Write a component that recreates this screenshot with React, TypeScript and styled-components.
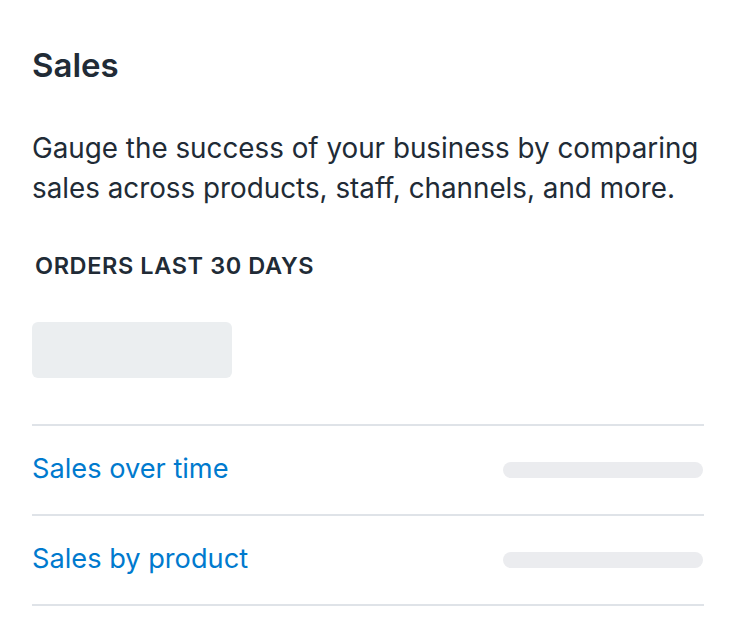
import React from 'react';
import styled, { createGlobalStyle } from 'styled-components';

const GlobalStyle = createGlobalStyle`
  html, body {
    margin: 0;
    padding: 0;
    background: #ffffff;
  }
  body {
    font-family: Inter, "Noto Sans", "DejaVu Sans", sans-serif;
    color: #212b36;
    -webkit-font-smoothing: antialiased;
  }
`;

const Card = styled.section`
  padding: 41px 32px 0;
  background: #ffffff;
`;

const Title = styled.h2`
  margin: 0;
  font-size: 33px;
  line-height: 48px;
  font-weight: 600;
  color: #212b36;
`;

const Description = styled.p`
  margin: 39px 0 0;
  font-size: 27.8px;
  line-height: 40px;
  font-weight: 400;
  color: #212b36;
`;

const Subheading = styled.h3`
  margin: 42px 0 0;
  padding-left: 3px;
  font-size: 23.5px;
  line-height: 32px;
  font-weight: 600;
  text-transform: uppercase;
  letter-spacing: 0.6px;
  color: #212b36;
`;

const SkeletonBox = styled.div`
  margin-top: 40px;
  width: 200px;
  height: 56px;
  border-radius: 6px;
  background: #ebeef0;
`;

const List = styled.ul`
  list-style: none;
  margin: 46px 0 0;
  padding: 0;
  border-bottom: 2px solid #dfe3e8;
`;

const Row = styled.li`
  display: flex;
  align-items: center;
  justify-content: space-between;
  height: 88px;
  border-top: 2px solid #dfe3e8;
`;

const ReportLink = styled.a`
  font-size: 27.2px;
  line-height: 40px;
  margin-top: -2px;
  color: #007ace;
  text-decoration: none;
`;

const SkeletonBar = styled.div`
  width: 200px;
  height: 16px;
  margin-right: 1px;
  border-radius: 8px;
  background: #ebecef;
`;

const reports = ['Sales over time', 'Sales by product'];

const App = () => {
  return (
    <>
      <GlobalStyle />
      <Card>
        <Title>Sales</Title>
        <Description>
          Gauge the success of your business by comparing sales across products, staff, channels, and more.
        </Description>
        <Subheading>Orders last 30 days</Subheading>
        <SkeletonBox />
        <List>
          {reports.map((name) => (
            <Row key={name}>
              <ReportLink href="#">{name}</ReportLink>
              <SkeletonBar />
            </Row>
          ))}
        </List>
      </Card>
    </>
  );
};

export default App;
